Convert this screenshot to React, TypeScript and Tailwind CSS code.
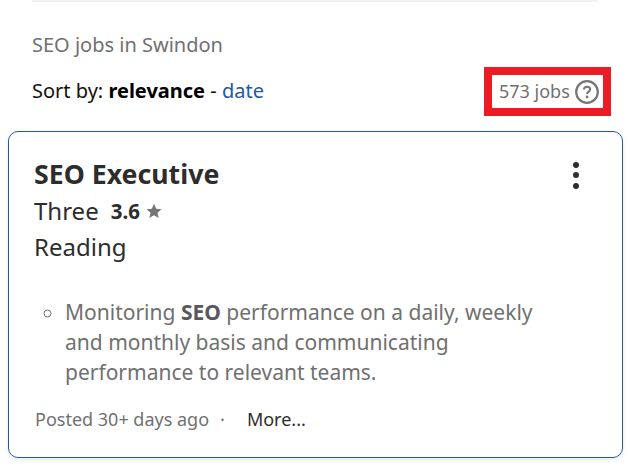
function HelpIcon() {
  return (
    <svg width="24" height="24" viewBox="0 0 24 24" fill="none" className="shrink-0">
      <circle cx="12" cy="12" r="10.8" stroke="#767676" strokeWidth="2.2" />
      <path d="M8.9 9.5c.1-1.8 1.4-2.8 3.2-2.8 1.8 0 3.1 1 3.1 2.6 0 2.3-3.1 2.3-3.1 4.7" stroke="#767676" strokeWidth="2.1" />
      <circle cx="12.1" cy="17" r="1.4" fill="#767676" />
    </svg>
  );
}

function StarIcon() {
  return (
    <svg width="16" height="16" viewBox="0 0 16 16" className="shrink-0">
      <path d="M8 .8l2.2 4.9 5.3.6-4 3.5 1.2 5.3L8 12.3l-4.7 2.8 1.2-5.3-4-3.5 5.3-.6z" fill="#767676" />
    </svg>
  );
}

export default function App() {
  return (
    <div className="h-[466px] w-[630px] overflow-hidden bg-white font-['Noto_Sans','Open_Sans',sans-serif] text-[#2d2d2d]">
      <div className="mx-[32px] h-[2px] bg-[#f3f2f1]" />
      <p className="ml-[32px] mt-[31px] text-[20px] leading-[24px] text-[#707070]">SEO jobs in Swindon</p>
      <div className="mt-[10px] flex items-center justify-between pl-[32px] pr-[19px]">
        <div className="pb-[2px] text-[20px] leading-[28px] text-[#111111]">
          Sort by: <b className="text-black">relevance</b> - <a className="text-[#2557a7]">date</a>
        </div>
        <div className="flex h-[49px] w-[127px] items-center gap-[5px] border-[8px] border-[#ed1c24] pl-[7px] text-[18px] text-[#707070]">
          <span>573 jobs</span>
          <HelpIcon />
        </div>
      </div>
      <article className="relative ml-[8px] mt-[15px] h-[327px] w-[615px] rounded-[10px] border border-[#2557a7] pl-[25px] pt-[24px] shadow-[0_2px_4px_rgba(0,0,0,0.08)]">
        <h2 className="text-[26.7px] font-bold leading-[36px]">SEO Executive</h2>
        <div className="mt-[2px] flex items-center text-[24px] leading-[34px]">
          <span>Three</span>
          <b className="ml-[12px] text-[20.5px]">3.6</b>
          <span className="ml-[6px]">
            <StarIcon />
          </span>
        </div>
        <p className="mt-[2px] text-[24px] leading-[34px]">Reading</p>
        <ul className="mt-[33px] list-[circle] pl-[31px] pr-[70px] text-[21px] leading-[30px] text-[#707070] marker:text-[#707070]">
          <li>
            Monitoring <b className="text-[#595959]">SEO</b> performance on a daily, weekly and monthly basis and communicating performance to relevant teams.
          </li>
        </ul>
        <div className="mt-[20px] flex items-center text-[18px] leading-[24px] text-[#707070]">
          <span className="ml-[1px]">Posted 30+ days ago</span>
          <span className="ml-[11px]">·</span>
          <span className="ml-[22px] text-[#2d2d2d]">More...</span>
        </div>
        <div className="absolute right-[43px] top-[30px] flex flex-col gap-[4.3px]">
          <span className="h-[6px] w-[6px] rounded-full bg-[#2d2d2d]" />
          <span className="h-[6px] w-[6px] rounded-full bg-[#2d2d2d]" />
          <span className="h-[6px] w-[6px] rounded-full bg-[#2d2d2d]" />
        </div>
      </article>
    </div>
  );
}
